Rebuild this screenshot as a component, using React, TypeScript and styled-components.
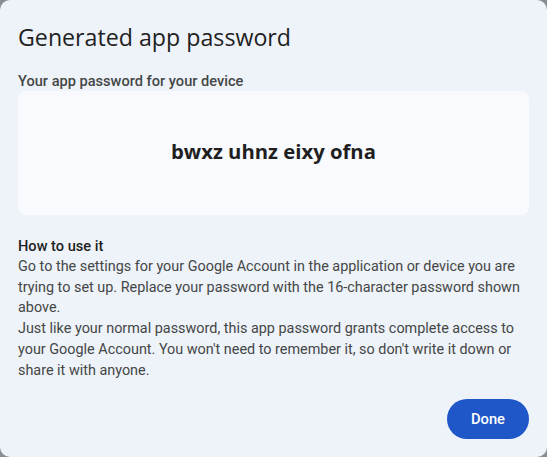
import React from 'react'
import styled, {createGlobalStyle} from 'styled-components'

const GlobalStyle = createGlobalStyle`
  html, body {
    margin: 0;
    padding: 0;
    background: #8a8d93;
  }
  body {
    font-family: Roboto, "Noto Sans", Arial, sans-serif;
  }
`

const Dialog = styled.div`
  box-sizing: border-box;
  width: 547px;
  height: 457px;
  background: #eef2f9;
  border-radius: 10px;
  padding: 20px 18px 0 18px;
  display: flex;
  flex-direction: column;
  color: #1f1f1f;
`

const Title = styled.h1`
  margin: 0;
  font-family: "Open Sans", sans-serif;
  font-size: 23.2px;
  font-weight: 400;
  line-height: 34px;
  color: #1f1f1f;
`

const Label = styled.h2`
  margin: 18px 0 0;
  font-size: 14.6px;
  font-weight: 500;
  line-height: 18px;
  color: #444746;
`

const PasswordBox = styled.div`
  box-sizing: border-box;
  margin-top: 1px;
  height: 124px;
  padding-bottom: 4px;
  border-radius: 8px;
  background: #f8fafd;
  display: flex;
  align-items: center;
  justify-content: center;
`

const Password = styled.span`
  font-family: "Open Sans", sans-serif;
  font-size: 20.3px;
  font-weight: 700;
  color: #1f1f1f;
`

const Section = styled.section`
  margin-top: 21px;
  color: #444746;
`

const SectionTitle = styled.h3`
  margin: 0;
  font-size: 14.6px;
  font-weight: 500;
  line-height: 20.8px;
  color: #1f1f1f;
`

const Paragraph = styled.p`
  margin: 0;
  font-size: 14.4px;
  line-height: 20.8px;
`

const Footer = styled.div`
  margin-top: auto;
  padding-bottom: 18px;
  display: flex;
  justify-content: flex-end;
`

const Button = styled.button`
  width: 82px;
  height: 40px;
  border: none;
  border-radius: 20px;
  background: #1f57c9;
  color: #fff;
  font-family: Roboto, sans-serif;
  font-size: 14.7px;
  font-weight: 500;
  cursor: pointer;
`

const App = () => (
  <>
    <GlobalStyle/>
    <Dialog>
      <Title>Generated app password</Title>
      <Label>Your app password for your device</Label>
      <PasswordBox>
        <Password>bwxz uhnz eixy ofna</Password>
      </PasswordBox>
      <Section>
        <SectionTitle>How to use it</SectionTitle>
        <Paragraph>
          Go to the settings for your Google Account in the application or device you are trying to set up. Replace your password with the 16-character password shown above.
        </Paragraph>
        <Paragraph>
          Just like your normal password, this app password grants complete access to your Google Account. You won't need to remember it, so don't write it down or share it with anyone.
        </Paragraph>
      </Section>
      <Footer>
        <Button>Done</Button>
      </Footer>
    </Dialog>
  </>
)

export default App
